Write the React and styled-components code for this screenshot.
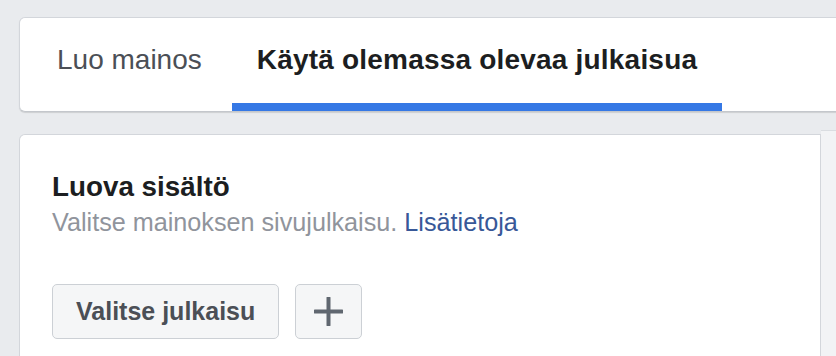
import React from "react";
import styled, { createGlobalStyle } from "styled-components";

const Global = createGlobalStyle`
  html, body { margin: 0; padding: 0; background: #e9ebee; overflow: hidden; }
  body { font-family: "Liberation Sans", Arial, sans-serif; }
  * { box-sizing: border-box; }
`;

const Page = styled.div`
  width: 836px;
  height: 356px;
  padding: 17px 0 0 19px;
  overflow: hidden;
`;

const TabCard = styled.div`
  display: flex;
  gap: 5px;
  height: 95px;
  margin-right: -12px;
  padding-left: 12px;
  background: #fff;
  border: 1px solid #d3d6db;
  border-bottom-color: #c4c7cc;
  border-radius: 6px 0 0 6px;
  box-shadow: 0 1px 1px rgba(0, 0, 0, 0.12);
`;

const Tab = styled.div`
  padding: 26px 25px 0;
  line-height: 32px;
  font-size: 28px;
  letter-spacing: ${(p) => (p.$active ? "0.2px" : "0")};
  font-weight: ${(p) => (p.$active ? 700 : 400)};
  color: ${(p) => (p.$active ? "#1c1e21" : "#4b4f56")};
  border-bottom: 8px solid ${(p) => (p.$active ? "#3578e5" : "transparent")};
  white-space: nowrap;
`;

const Row = styled.div`
  display: flex;
  align-items: flex-start;
  margin-top: 18px;
`;

const Card = styled.section`
  width: 802px;
  height: 240px;
  margin-top: 4px;
  padding: 36px 0 0 32px;
  background: #fff;
  border: 1px solid #d3d6db;
  border-bottom: none;
  border-radius: 6px 0 0 0;
`;

const Aside = styled.div`
  flex: 1;
  height: 240px;
  background: #f2f3f5;
  border-top: 1px solid #dadde1;
`;

const Heading = styled.h2`
  margin: 0;
  font-size: 27.8px;
  line-height: 32px;
  font-weight: 700;
  color: #1c1e21;
`;

const Subtitle = styled.p`
  margin: 4px 0 0;
  font-size: 25.2px;
  line-height: 30px;
  color: #90949c;
`;

const Link = styled.a`
  color: #385898;
  text-decoration: none;
`;

const Actions = styled.div`
  display: flex;
  gap: 16px;
  margin-top: 47px;
`;

const Button = styled.button`
  display: flex;
  align-items: center;
  justify-content: center;
  height: 55px;
  width: ${(p) => (p.$square ? "67px" : "auto")};
  padding: ${(p) => (p.$square ? "0" : "0 23px")};
  background: #f5f6f7;
  border: 1px solid #ccd0d5;
  border-radius: 5px;
  font-family: "Liberation Sans", Arial, sans-serif;
  font-size: 25px;
  font-weight: 700;
  color: #4b4f56;
  cursor: pointer;
`;

const PlusIcon = () => (
  <svg width="29" height="29" viewBox="0 0 29 29" aria-hidden="true">
    <path d="M14.5 1v27M1 14.5h27" stroke="#606770" strokeWidth="4" strokeLinecap="round" />
  </svg>
);

export default function App() {
  return (
    <>
      <Global />
      <Page>
        <TabCard>
          <Tab>Luo mainos</Tab>
          <Tab $active>Käytä olemassa olevaa julkaisua</Tab>
        </TabCard>
        <Row>
          <Card>
            <Heading>Luova sisältö</Heading>
            <Subtitle>
              Valitse mainoksen sivujulkaisu. <Link href="#">Lisätietoja</Link>
            </Subtitle>
            <Actions>
              <Button>Valitse julkaisu</Button>
              <Button $square>
                <PlusIcon />
              </Button>
            </Actions>
          </Card>
          <Aside />
        </Row>
      </Page>
    </>
  );
}
